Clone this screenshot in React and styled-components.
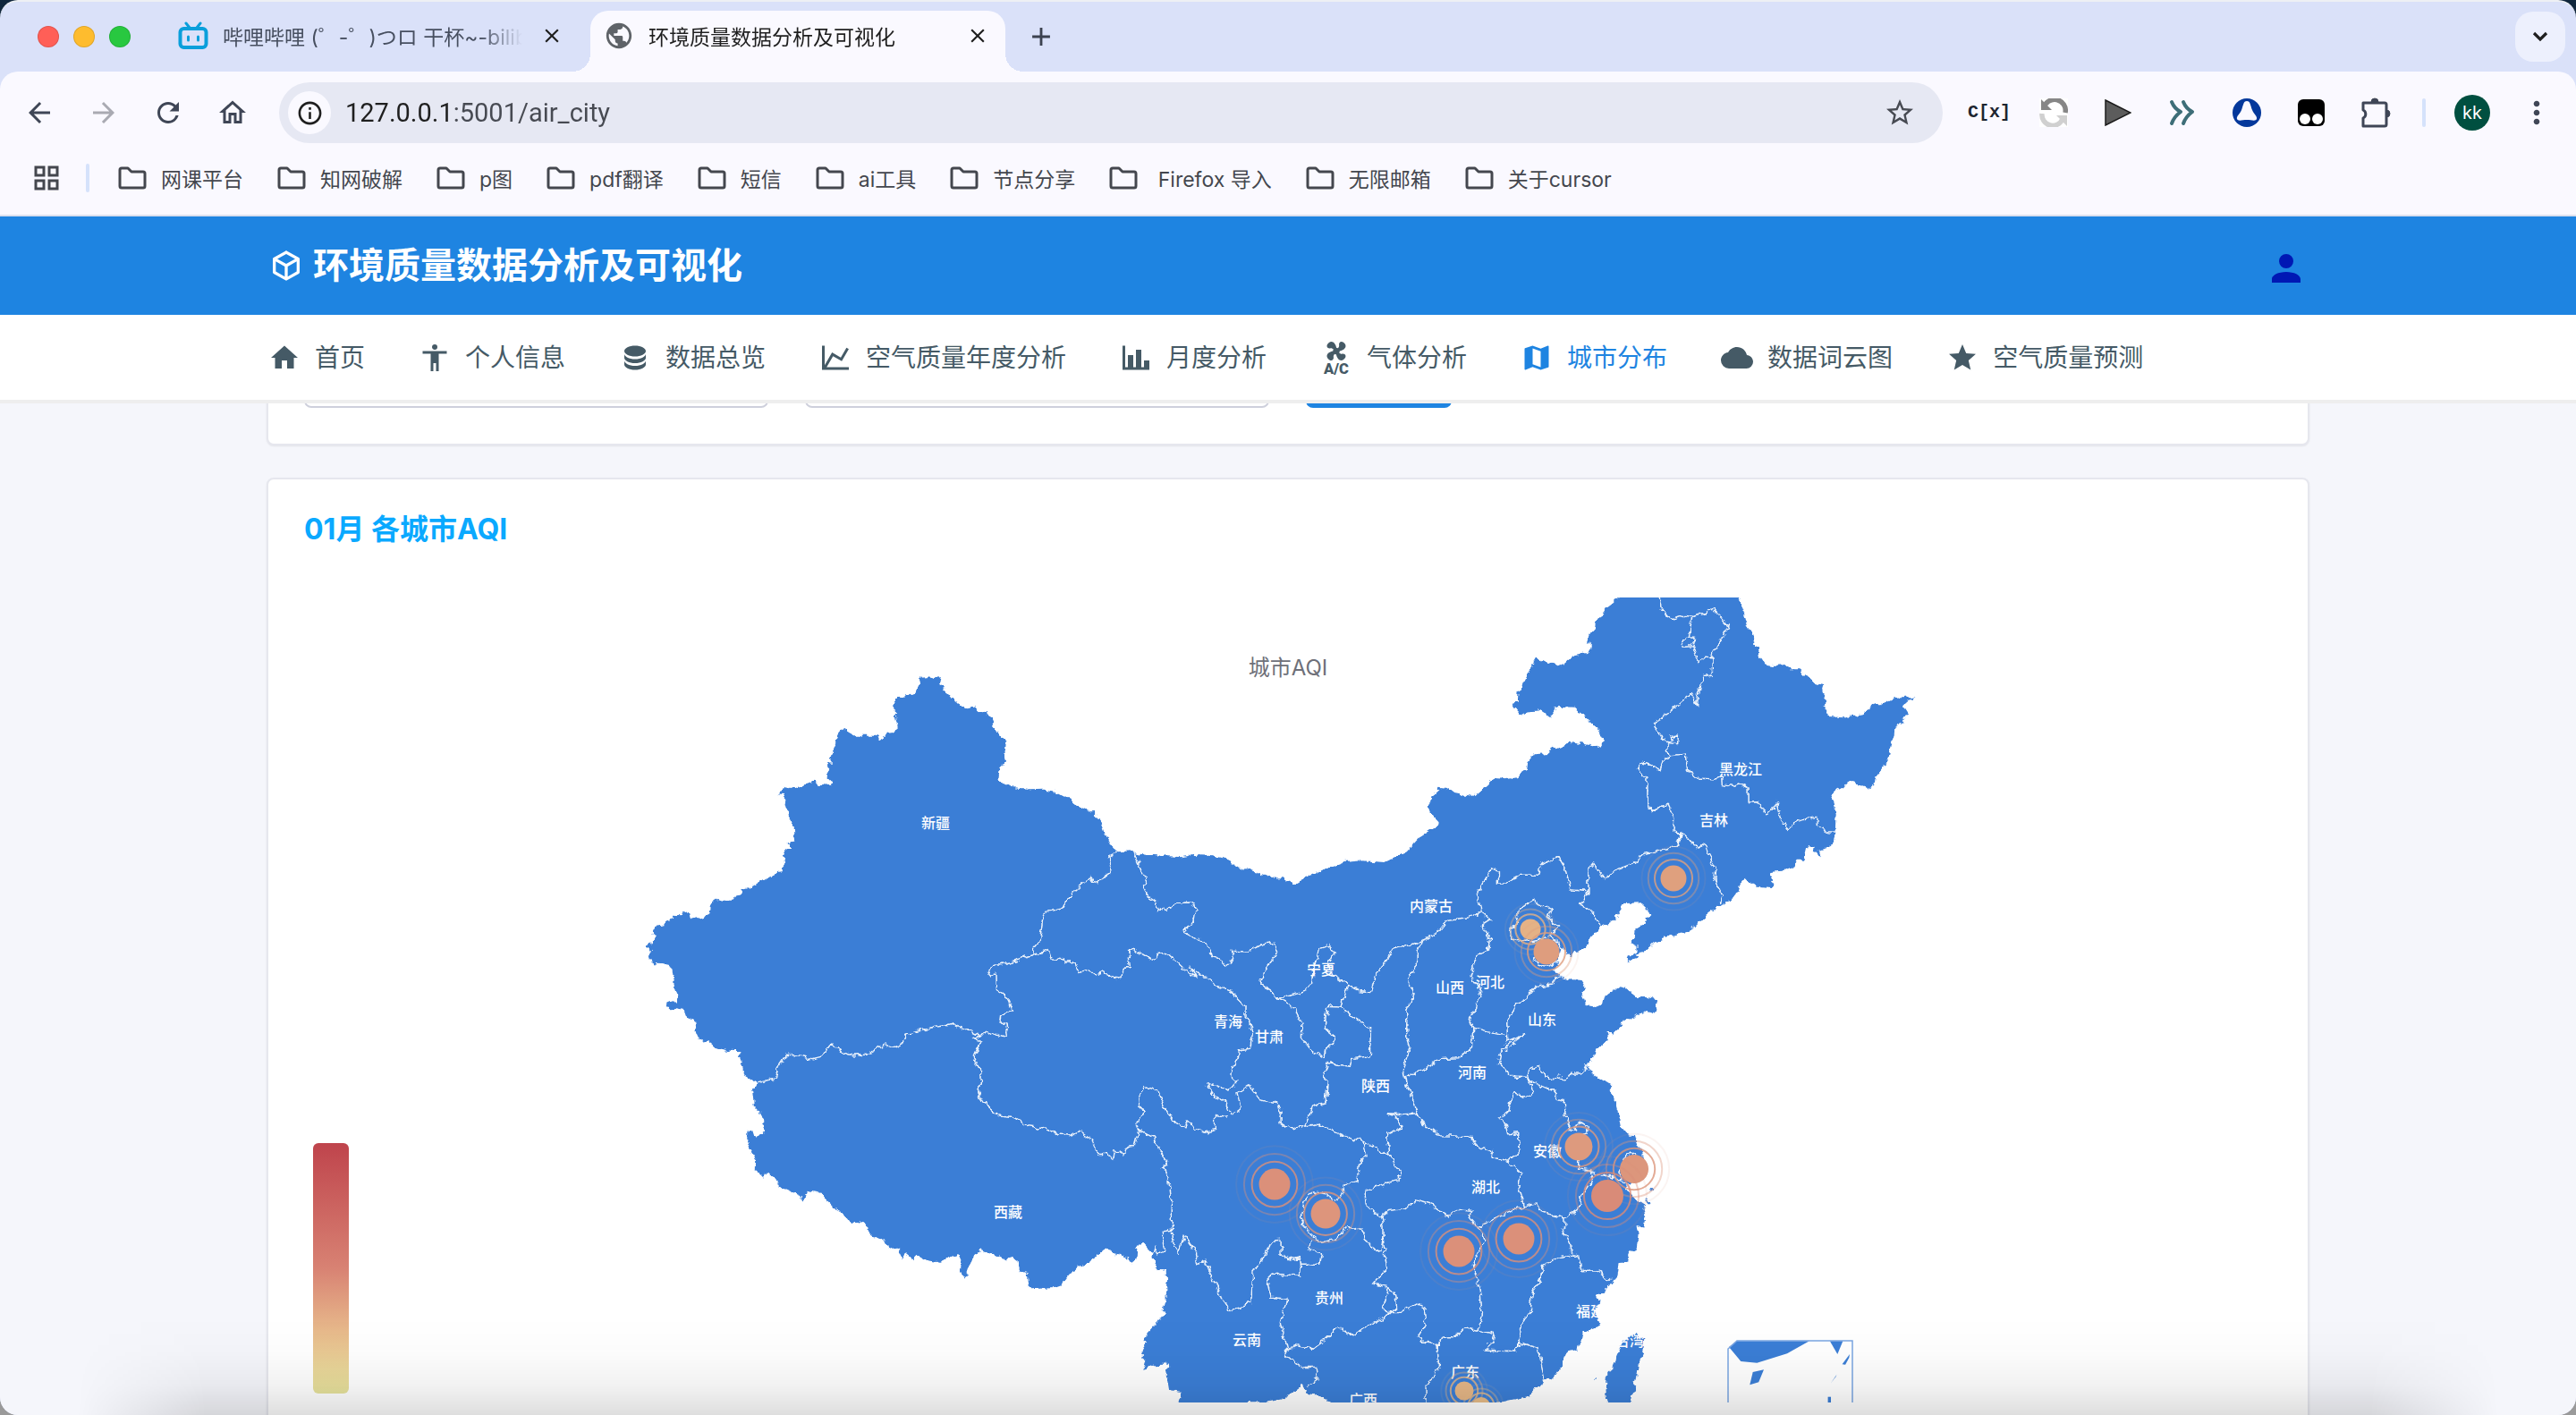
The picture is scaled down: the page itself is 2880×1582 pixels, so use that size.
import React from 'react';
import styled, { createGlobalStyle } from 'styled-components';
import {
    MdAdd,
    MdArrowBack,
    MdArrowForward,
    MdClose,
    MdInfoOutline,
    MdMoreVert,
    MdOutlineGridView,
    MdOutlineHome,
    MdPublic,
    MdRefresh,
    MdStarOutline,
} from 'react-icons/md';

const GlobalStyle = createGlobalStyle`
    * {
        box-sizing: border-box;
    }

    body {
        margin: 0;
        font-family: Inter, "Noto Sans CJK SC", sans-serif;
        background: linear-gradient(#10263c 50%, #9a9a9a 50%);
    }

    button {
        padding: 0;
        border: 0;
        background: none;
        font: inherit;
        color: inherit;
        cursor: pointer;
    }

    a {
        color: inherit;
        text-decoration: none;
    }

    svg {
        display: block;
        flex: none;
    }
`;

/* ---------- browser frame ---------- */

const BrowserWindow = styled.div`
    position: relative;
    display: flex;
    flex-direction: column;
    height: 100vh;
    overflow: hidden;
    border-radius: 20px;
    background: #dae1f9;
    border-top: 2px solid #eef0f4;
`;

const DockShade = styled.div`
    position: absolute;
    left: 0;
    right: 0;
    bottom: 0;
    height: 110px;
    pointer-events: none;
    background: linear-gradient(rgba(0, 0, 0, 0), rgba(0, 0, 0, 0.01) 35%, rgba(0, 0, 0, 0.05) 70%, rgba(0, 0, 0, 0.13));
    mask-image: linear-gradient(90deg, transparent 3%, #000 8%, #000 92%, transparent 97%);
`;

const TabStrip = styled.div`
    display: flex;
    align-items: flex-end;
    height: 78px;
    padding: 0 12px 0 42px;
`;

const Lights = styled.div`
    display: flex;
    gap: 16px;
    align-self: center;
    margin-right: 38px;
`;

const Light = styled.button`
    width: 24px;
    height: 24px;
    border-radius: 50%;
    background: ${props => props.$color};
    box-shadow: inset 0 0 0 1px rgba(0, 0, 0, 0.12);
`;

const Tab = styled.div`
    position: relative;
    display: flex;
    align-items: center;
    width: 464px;
    height: 68px;
    margin-right: 12px;
    padding: 0 18px 12px 16px;
    border-radius: 20px 20px 0 0;
    font-size: 23px;
    color: ${props => (props.$active ? '#1f1f1f' : '#474f60')};
    background: ${props => (props.$active ? '#faf9ff' : 'transparent')};

    &::before,
    &::after {
        content: '';
        display: ${props => (props.$active ? 'block' : 'none')};
        position: absolute;
        bottom: 0;
        width: 20px;
        height: 20px;
    }

    &::before {
        right: 100%;
        background: radial-gradient(circle at 0 0, transparent 20px, #faf9ff 20px);
    }

    &::after {
        left: 100%;
        background: radial-gradient(circle at 100% 0, transparent 20px, #faf9ff 20px);
    }
`;

const Favicon = styled.span`
    display: flex;
    justify-content: center;
    width: 32px;
    margin-right: 17px;
    color: #5f6368;
`;

const TabTitle = styled.span`
    flex: 1;
    overflow: hidden;
    white-space: nowrap;
    margin-right: 20px;
    mask-image: linear-gradient(90deg, #000 86%, transparent);
`;

const CloseTab = styled.button`
    display: flex;
    color: #1f1f1f;
`;

const NewTab = styled.button`
    display: flex;
    align-items: center;
    justify-content: center;
    align-self: center;
    width: 40px;
    height: 40px;
    margin-left: 8px;
    color: #3c4250;
`;

const TabSearch = styled.button`
    display: flex;
    align-items: center;
    justify-content: center;
    align-self: center;
    width: 56px;
    height: 56px;
    margin-left: auto;
    border-radius: 20px;
    background: #edf0fd;
`;

const Chrome = styled.div`
    border-radius: 20px 20px 0 0;
    background: #faf9ff;
    border-bottom: 2px solid #dbe0ee;
`;

const Toolbar = styled.div`
    display: flex;
    align-items: center;
    height: 92px;
    padding: 0 8px;
`;

const ToolButton = styled.button`
    display: flex;
    align-items: center;
    justify-content: center;
    width: 72px;
    height: 56px;
    color: ${props => (props.$muted ? '#a9aab2' : '#3f4656')};
`;

const Omnibox = styled.div`
    display: flex;
    align-items: center;
    flex: 1;
    height: 68px;
    margin: 0 16px;
    padding: 0 10px;
    border-radius: 34px;
    background: #e6e8f3;
`;

const SiteInfo = styled.button`
    display: flex;
    align-items: center;
    justify-content: center;
    width: 48px;
    height: 48px;
    border-radius: 50%;
    background: #faf9ff;
    color: #1f1f1f;
`;

const Address = styled.input`
    flex: 1;
    min-width: 0;
    padding: 0 0 0 16px;
    border: 0;
    outline: 0;
    font-family: Roboto, sans-serif;
    font-size: 29px;
    background: linear-gradient(90deg, #1f1f1f 132px, #474a52 132px);
    background-clip: text;
    -webkit-text-fill-color: transparent;
`;

const Star = styled.button`
    display: flex;
    width: 56px;
    justify-content: center;
    margin-right: 10px;
    color: #474a52;
`;

const Divider = styled.span`
    width: 4px;
    height: 32px;
    margin: ${props => props.$margin};
    border-radius: 2px;
    background: #d5e2fb;
`;

const Avatar = styled.button`
    width: 40px;
    height: 40px;
    margin-right: 16px;
    border-radius: 50%;
    background: #004f40;
    color: #fff;
    font-size: 20px;
`;

const ExtText = styled.span`
    font-family: "Liberation Mono", monospace;
    font-size: 20px;
    font-weight: 700;
    line-height: 24px;
    color: #1d2530;
`;

const Bookmarks = styled.nav`
    display: flex;
    align-items: center;
    height: 68px;
    padding: 0 34px 14px;
    font-size: 23px;
    color: #44474e;
`;

const Bookmark = styled.a`
    display: flex;
    align-items: center;
    gap: 16px;
    margin-right: 38px;
    white-space: pre;
`;

/* ---------- web page ---------- */

const Viewport = styled.div`
    flex: 1;
    overflow: hidden;
    background: #f5f6fb;
`;

const Container = styled.div`
    width: 100%;
    max-width: 2284px;
    margin: 0 auto;
    padding: 0 2px;
    display: flex;
    align-items: center;
`;

const SiteHeader = styled.header`
    display: flex;
    flex: none;
    height: 110px;
    background: #1e84e1;
`;

const Brand = styled.h1`
    display: flex;
    align-items: center;
    gap: 10px;
    margin: 0;
    font-size: 40px;
    font-weight: 700;
    line-height: 56px;
    color: #fff;
`;

const UserButton = styled.button`
    margin-left: auto;
    padding-top: 6px;
    color: #0018b4;
`;

const SiteNav = styled.nav`
    display: flex;
    flex: none;
    height: 99px;
    background: #fff;
    border-bottom: 4px solid #eee;
`;

const NavList = styled.ul`
    display: flex;
    gap: 60px;
    margin: 0;
    padding: 0;
    list-style: none;
`;

const NavLink = styled.a`
    display: flex;
    align-items: center;
    gap: 16px;
    font-size: 28px;
    line-height: 40px;
    white-space: nowrap;
    color: ${props => (props.$active ? '#1e84e1' : '#455a66')};
`;

const Main = styled.main`
    max-width: 2284px;
    margin: -113px auto 0;
`;

const Card = styled.section`
    margin-bottom: 36px;
    padding: 40px;
    border: 2px solid #e6e7ee;
    border-radius: 8px;
    background: #fff;
    box-shadow: 0 1px 2px rgba(0, 0, 0, 0.08);
`;

const FilterRow = styled.form`
    display: flex;
    gap: 41px;
`;

const FilterSelect = styled.select`
    width: 519px;
    height: 76px;
    border: 2px solid #ced0dc;
    border-radius: 8px;
    background: #fff;
    appearance: none;
`;

const FilterButton = styled.button`
    width: 163px;
    height: 76px;
    border-radius: 8px;
    background: #1e84e1;
`;

const CardTitle = styled.h4`
    margin: -8px 0 52px;
    font-size: 32px;
    font-weight: 700;
    line-height: 48px;
    color: #0aa9ff;
`;

const Chart = styled.svg`
    width: 100%;
    height: auto;
    overflow: hidden;
`;

const ChartTitle = styled.text`
    font-size: 24px;
    fill: #6e7079;
    text-anchor: middle;
`;

const ProvinceName = styled.text`
    font-size: 16px;
    font-weight: 500;
    fill: #fff;
    text-anchor: middle;
`;

/* ---------- icons ---------- */

const iconPaths = {
    cube: 'M21,16.5C21,16.88 20.79,17.21 20.47,17.38L12.57,21.82C12.41,21.94 12.21,22 12,22C11.79,22 11.59,21.94 11.43,21.82L3.53,17.38C3.21,17.21 3,16.88 3,16.5V7.5C3,7.12 3.21,6.79 3.53,6.62L11.43,2.18C11.59,2.06 11.79,2 12,2C12.21,2 12.41,2.06 12.57,2.18L20.47,6.62C20.79,6.79 21,7.12 21,7.5V16.5M12,4.15L6.04,7.5L12,10.85L17.96,7.5L12,4.15M5,15.91L11,19.29V12.58L5,9.21V15.91M19,15.91V9.21L13,12.58V19.29L19,15.91Z',
    account: 'M12,4A4,4 0 0,1 16,8A4,4 0 0,1 12,12A4,4 0 0,1 8,8A4,4 0 0,1 12,4M12,14C16.42,14 20,15.79 20,18V20H4V18C4,15.79 7.58,14 12,14Z',
    home: 'M10,20V14H14V20H19V12H22L12,3L2,12H5V20H10Z',
    human: 'M21,9H15V22H13V16H11V22H9V9H3V7H21V9M12,2A2,2 0 0,1 14,4A2,2 0 0,1 12,6C10.89,6 10,5.1 10,4C10,2.89 10.89,2 12,2Z',
    database: 'M12,3C7.58,3 4,4.79 4,7C4,9.21 7.58,11 12,11C16.42,11 20,9.21 20,7C20,4.79 16.42,3 12,3M4,9V12C4,14.21 7.58,16 12,16C16.42,16 20,14.21 20,12V9C20,11.21 16.42,13 12,13C7.58,13 4,11.21 4,9M4,14V17C4,19.21 7.58,21 12,21C16.42,21 20,19.21 20,17V14C20,16.21 16.42,18 12,18C7.58,18 4,16.21 4,14Z',
    chartLine: 'M16,11.78L20.24,4.45L21.97,5.45L16.74,14.5L10.23,10.75L5.46,19H22V21H2V3H4V17.54L9.5,8L16,11.78Z',
    chartBar: 'M22,21H2V3H4V19H6V10H10V19H12V6H16V19H18V14H22V21Z',
    fan: 'M6.59,0.66C8.93,-1.15 11.47,1.06 12.04,4.5C12.47,4.5 12.89,4.62 13.27,4.84C13.79,4.24 14.25,3.42 14.07,2.5C13.65,0.35 16.06,-1.39 18.35,1.58C20.16,3.92 17.95,6.46 14.5,7.03C14.5,7.46 14.39,7.89 14.16,8.27C14.76,8.78 15.58,9.24 16.5,9.06C18.63,8.64 20.38,11.04 17.41,13.34C15.07,15.15 12.53,12.94 11.96,9.5C11.53,9.5 11.11,9.37 10.74,9.15C10.22,9.75 9.75,10.58 9.93,11.5C10.35,13.64 7.94,15.39 5.65,12.42C3.83,10.07 6.05,7.53 9.5,6.97C9.5,6.54 9.63,6.12 9.85,5.74C9.25,5.23 8.43,4.76 7.5,4.94C5.37,5.36 3.62,2.96 6.59,0.66Z',
    map: 'M15,19L9,16.89V5L15,7.11M20.5,3C20.44,3 20.39,3 20.34,3L15,5.1L9,3L3.36,4.9C3.15,4.97 3,5.15 3,5.38V20.5A0.5,0.5 0 0,0 3.5,21C3.55,21 3.61,21 3.66,20.97L9,18.9L15,21L20.64,19.1C20.85,19 21,18.85 21,18.62V3.5A0.5,0.5 0 0,0 20.5,3Z',
    cloud: 'M19.35,10.03C18.67,6.59 15.64,4 12,4C9.11,4 6.6,5.64 5.35,8.03C2.34,8.36 0,10.9 0,14A6,6 0 0,0 6,20H19A5,5 0 0,0 24,15C24,12.36 21.95,10.22 19.35,10.03Z',
    star: 'M12,17.27L18.18,21L16.54,13.97L22,9.24L14.81,8.62L12,2L9.19,8.62L2,9.24L7.45,13.97L5.82,21L12,17.27Z',
};

const NavIcon = styled.svg`
    overflow: visible;
`;

const AcLabel = styled.text`
    font-family: Roboto, sans-serif;
    font-size: 11px;
    font-weight: 900;
    text-anchor: middle;
`;

const Icon = ({ name, size = 36 }) => (
    <NavIcon width={size} height={size} viewBox="0 0 24 24" fill="currentColor" aria-hidden="true">
        <path d={iconPaths[name]} />
        {name === 'fan' && <AcLabel x="12" y="24">A/C</AcLabel>}
    </NavIcon>
);

const FolderIcon = () => (
    <svg width="32" height="26" viewBox="0 0 32 26" fill="none" stroke="currentColor" strokeWidth="3" strokeLinejoin="round">
        <path d="M2 4a2 2 0 0 1 2-2h7l4 4h13a2 2 0 0 1 2 2v14a2 2 0 0 1-2 2H4a2 2 0 0 1-2-2z" />
    </svg>
);

const BiliIcon = () => (
    <svg width="34" height="32" viewBox="0 0 34 32" fill="none" stroke="#0a9fdb" strokeLinecap="round">
        <path d="M9 2l4 5M25 2l-4 5" strokeWidth="3" />
        <rect x="2.500" y="8" width="29" height="21" rx="4" strokeWidth="4" />
        <path d="M11.500 17v4M22.500 17v4" strokeWidth="3" />
    </svg>
);

const ChevronIcon = () => (
    <svg width="20" height="14" viewBox="0 0 20 14" fill="none" stroke="#1f1f1f" strokeWidth="3.200">
        <path d="M3 3l7 7 7-7" />
    </svg>
);

const SyncIcon = () => (
    <svg width="32" height="32" viewBox="0 0 32 32" fill="none">
        <rect width="32" height="32" fill="#fff" />
        <path d="M5 11A12 12 0 0 1 29 16" stroke="#868686" strokeWidth="5.500" />
        <path d="M2 1v12h12z" fill="#868686" />
        <path d="M3 17a12 12 0 0 0 23 6" stroke="#d0d0d0" strokeWidth="5.500" />
        <path d="M31 31V19H19z" fill="#d0d0d0" />
    </svg>
);

const PlayIcon = () => (
    <svg width="30" height="30" viewBox="0 0 30 30">
        <path d="M1 1l28 14L1 29z" fill="#5c5c5c" stroke="#1c1c1c" strokeWidth="1.500" />
    </svg>
);

const ChevronsIcon = () => (
    <svg width="32" height="32" viewBox="0 0 32 32" fill="none" stroke="#3e6e78" strokeLinecap="round" strokeLinejoin="round" strokeWidth="4">
        <path d="M4 4c2 5 6 9 10 11-4 3-8 7-10 13M17 4c2 5 6 9 10 11-4 3-8 7-10 13" />
    </svg>
);

const CompassIcon = () => (
    <svg width="32" height="32" viewBox="0 0 32 32">
        <circle cx="16" cy="16" r="16" fill="#04389b" />
        <path d="M16 3c4 0 4 5 6 10s6 7 5 10-6 1-11 1-10 2-11-1 3-5 5-10 2-10 6-10z" fill="#faf9ff" />
    </svg>
);

const TamperIcon = () => (
    <svg width="30" height="30" viewBox="0 0 30 30">
        <rect width="30" height="30" rx="6" />
        <circle cx="8" cy="22" r="6" fill="#fff" />
        <circle cx="22" cy="22" r="6" fill="#fff" />
    </svg>
);

const PuzzleIcon = () => (
    <svg width="34" height="34" viewBox="0 0 34 34" fill="none" stroke="currentColor" strokeWidth="3" strokeLinejoin="round">
        <path d="M3 6h24a2 2 0 0 1 2 2v22a2 2 0 0 1-2 2H3v-9a5 5 0 0 0 0-9V6z" />
        <path d="M12 5a4 4 0 0 1 8 0zM29 14a4 4 0 0 1 0 8z" fill="currentColor" strokeWidth="1" />
    </svg>
);

/* ---------- map data ---------- */

// The borders were digitised on five overlapping sheets, each with its own
// origin and scale. Every list below is "x,y x,y ..." on its sheet.
const sheet = (left, top, scaleX, scaleY) => points => points
    .trim()
    .split(/\s+/)
    .map(pair => {
        const [x, y] = pair.split(',').map(Number);
        return `${Math.round((left + x / scaleX) * 10) / 10},${Math.round((top + y / scaleY) * 10) / 10}`;
    })
    .join(' ');

const northWest = sheet(700, 660, 2.24, 3);
const southWest = sheet(700, 1000, 2.24, 2.694);
const central = sheet(1200, 900, 2.24, 2.299);
const northEast = sheet(1600, 650, 2.613, 3);
const southEast = sheet(1600, 1060, 2.613, 3);

const mainland = [
    northWest(`50,1190 66,1180 72,1165 66,1150 75,1127 95,1123 118,1100 115,1088 138,1090 154,1074 159,1105 185,1097
        195,1102 210,1075 215,1048 228,1035 245,1040 268,1040 272,1026 288,1020 290,1006 310,998 350,965 372,958 378,945
        392,943 390,930 397,918 393,890 398,875 413,862 404,852 413,843 424,842 421,800 410,770 405,735 402,718 404,703
        392,684 380,682 384,672 405,664 432,658 472,638 480,650 513,654 516,636 502,618 505,585 512,578 517,550 525,525
        528,500 536,475 542,466 560,480 575,488 625,488 637,498 655,482 670,480 678,460 673,435 670,385 680,357 705,354
        722,345 735,320 732,302 740,293 755,291 768,295 786,288 782,312 797,328 793,338 822,362 828,378 855,397 873,391
        888,410 900,406 902,418 916,428 925,460 935,485 943,490 951,515 950,535 944,547 950,572 935,605 933,628 942,652
        955,652 965,660 1003,665 1012,670 1045,668 1078,675 1115,702 1122,716 1155,740 1174,738 1174,762 1184,765
        1203,833 1226,866 1227,880 1270,877 1320,888 1390,895 1435,886 1462,887 1508,902 1523,928 1540,934 1557,935`),
    central(`403,158 432,162 465,175 500,188 528,187 530,197 555,202 580,187 620,170 680,147 725,143 780,147 835,120
        865,85 910,55 913,42 893,20 888,5`),
    northEast(`5,715 25,693 50,697 65,710 120,723 155,690 165,680 180,663 210,665 245,658 280,630 283,605 300,580
        345,576 352,556 365,562 405,542 430,548 440,543 480,555 498,550 502,530 490,500 470,480 455,455 435,440 418,422
        370,420 347,453 320,433 275,437 258,448 238,420 238,408 253,403 255,372 268,350 275,320 307,257 325,268 350,275
        372,283 390,275 415,250 455,240 467,225 467,207 455,203 466,175 478,160 480,145 490,130 512,90 530,75 548,54
        570,20 880,20 893,54 908,85 915,110 920,135 940,170 945,208 960,222 955,248 972,277 995,282 1030,280 1050,295
        1075,295 1100,320 1120,342 1145,348 1142,370 1155,393 1147,415 1165,450 1220,455 1262,448 1268,433 1297,412
        1315,412 1345,395 1412,385 1392,400 1380,425 1392,447 1375,475 1357,485 1355,515 1343,545 1338,575 1330,610
        1310,640 1297,660 1295,685 1285,695 1220,668 1205,690 1165,713 1178,745 1183,780 1180,840 1175,880 1160,893
        1130,902 1142,922 1118,912 1120,888 1100,885 1090,935 1068,935 1057,960 1040,970 988,975 990,990 1002,1010
        997,1030 955,1025 920,995 905,1008 895,1040 875,1070 850,1082 805,1120 770,1150 752,1178 700,1187 650,1212
        625,1240 600,1250 605,1262 572,1275 572,1262 605,1240 605,1222 582,1212 595,1198 597,1170 620,1155 638,1118
        628,1095 612,1078 560,1080 555,1100 530,1140 493,1160 470,1190 460,1215 445,1235 415,1240 413,1258 395,1248
        385,1225 378,1245 372,1275 360,1300`),
    southEast(`378,95 410,105 435,108 445,125 455,135 440,150 445,175 455,192 480,198 497,190 500,172 520,155 550,133
        570,138 600,165 630,165 662,172 658,200 655,218 630,210 600,225 560,245 555,262 530,290 513,280 518,300 500,330
        480,345 470,380 455,390 457,405 490,435 522,458 535,500 545,550 555,570 560,610 590,630 597,655 618,680 622,700
        615,725 605,760 585,790 565,800 570,810 590,830 605,850 625,865 618,880 625,905 620,935 600,930 605,960 600,1005
        580,1020 570,1050 550,1060 545,1095 530,1115 510,1150 485,1160 485,1175 495,1190 478,1215 487,1250 492,1270
        470,1275 455,1290 440,1290 440,1310 430,1345 395,1355 388,1375 385,1395 365,1430 350,1445 330,1447 320,1470
        300,1480 295,1500 260,1510 215,1520 180,1524 160,1560`),
    central('640,1560 640,1532 615,1522 590,1515 572,1492 545,1512 520,1528 490,1534 440,1534 430,1560 272,1560'),
    southWest(`1383,1530 1391,1515 1391,1500 1360,1495 1355,1460 1350,1435 1360,1413 1320,1415 1295,1433 1303,1410
        1290,1385 1302,1358 1300,1330 1325,1297 1335,1280 1350,1272 1343,1250 1352,1215 1350,1130 1330,1122 1322,1110
        1320,1080 1305,1065 1293,1050 1280,1060 1278,1098 1267,1108 1235,1085 1220,1075 1200,1068 1180,1080 1170,1098
        1118,1130 1097,1160 1092,1175 1075,1183 1010,1186 1007,1165 1005,1140 983,1133 980,1100 965,1088 955,1103
        925,1085 887,1073 865,1095 855,1130 855,1150 848,1157 837,1135 840,1105 832,1083 800,1098 780,1107 745,1100
        725,1085 715,1097 700,1083 695,1100 680,1063 655,1070 648,1038 630,1042 602,1017 600,990 585,983 568,995 550,965
        525,950 495,915 490,900 455,892 443,925 435,905 385,878 378,860 350,840 340,848 322,830 323,795 310,760 303,740
        303,717 316,710 320,725 330,735 345,715 343,680 335,655 320,635 316,592 330,570 295,543 290,515 282,490 288,472
        250,470 225,460 205,440 187,443 178,420 172,378 150,367 145,350 100,340 102,330 118,322 130,322 122,290 115,220
        105,213 78,208 72,220 62,213 58,185 65,175 50,155`),
].join(' ');

const islands = [
    southEast('597,1290 607,1305 620,1310 617,1360 605,1400 600,1450 590,1490 580,1540 518,1540 508,1490 512,1440 530,1400 548,1350 562,1320 585,1300'),
    southEast('623,845 634,843 643,853 632,853'),
    southEast('640,810 648,810 646,820'),
    southEast('478,1444 483,1444 482,1450'),
];

const insetLand = [
    southEast('893,1318 1105,1318 1040,1360 952,1391 905,1386 870,1338'),
    southEast('1165,1318 1203,1318 1187,1362'),
    southEast('1201,1396 1223,1362 1221,1374 1210,1397'),
    southEast('1167,1460 1185,1430 1182,1438'),
    southEast('1159,1505 1168,1505 1168,1530 1159,1530'),
    southEast('940,1422 972,1414 957,1456 931,1465'),
];

const borders = [
    northWest('1227,880 1210,893 1208,905 1217,930 1212,950 1172,985 1163,967 1145,980 1120,1010 1100,1045 1093,1068 1050,1078 1043,1110 1035,1175 1020,1200 1022,1222'),
    northWest('1270,877 1303,978 1293,995 1310,1030 1330,1048 1330,1078 1350,1062 1352,1072 1372,1055 1400,1047 1418,1048 1427,1070 1423,1105 1410,1130 1390,1142'),
    northWest('1022,1222 1058,1208 1064,1232 1098,1235 1100,1248 1125,1247 1133,1282 1160,1275 1175,1288 1193,1280 1223,1303 1240,1293 1250,1262 1262,1262 1258,1205 1275,1208 1320,1242 1330,1220 1352,1216 1400,1275 1425,1297 1415,1270 1440,1292 1460,1300 1470,1320 1515,1345 1550,1395'),
    northWest('1022,1222 970,1245 930,1258 905,1272 913,1295 925,1285 926,1340 950,1362 966,1405 938,1425 936,1445 952,1452 955,1493'),
    southWest('955,425 945,430 900,412 888,427 855,408 820,392 760,402 705,417 695,445 670,460 650,450 600,483 570,485 540,475 530,458 510,455 490,488 465,495 435,485 400,483 385,510 375,555 330,565'),
    southWest('888,427 870,433 887,445 870,490 880,520 888,525 890,570 880,595 900,635 935,668 975,673 1010,698 1060,708 1080,722 1110,725 1137,710 1165,735 1172,760 1185,783 1205,782 1218,795 1225,770 1245,785 1255,763 1275,755 1285,712 1280,690 1297,648 1285,640 1283,608 1300,580 1332,593 1350,650 1375,685 1400,700 1408,680 1425,705 1450,717 1475,710 1475,665 1505,668'),
    southWest('1285,712 1320,733 1335,765 1356,815 1345,822 1360,870 1367,930 1367,1010 1372,1060 1383,1080 1398,1025 1425,1075 1430,1112 1450,1103 1470,1160 1492,1220 1510,1255'),
    southWest('1367,1010 1345,1015 1345,1050 1348,1075 1332,1085 1325,1063 1322,1080'),
    central('430,517 430,540 440,552 450,583 442,628 415,632 413,650 395,680 398,700 410,710 400,725 385,733 342,713 337,725 350,745 380,762 385,775 395,800'),
    central('272,322 335,358 345,385 385,410 400,395 395,373 430,375 475,360 505,355 512,380 500,397 475,430 470,460 515,497 585,475 597,460 600,425 615,370 640,362 655,378 640,405 640,430 670,447 690,465 715,477 748,480 753,455 765,430 800,370 850,358 873,348'),
    central('515,497 540,510 560,535 573,565 572,600 600,635 627,650 632,625 650,615 655,595 630,575 632,545 638,518 670,520 675,490 690,465'),
    central('670,520 710,550 745,572 742,645 700,652 695,672 637,663 625,695 637,710 632,765 600,772 592,800 580,825 550,835 520,820 520,790 510,765 465,755 440,722 410,740 420,780 395,800'),
    central('580,825 610,820 680,850 725,865 790,900 785,845 820,830 815,805 785,795 830,797 865,795 845,750 830,697 825,680 842,625 835,600 835,530 852,485 838,450 850,425 865,400 865,370 873,348'),
    central('873,348 905,335 935,295 990,290 1022,275 1012,235 1020,210 1045,165 1065,170 1065,200 1085,200 1120,180 1165,180 1175,150 1215,132 1230,160 1245,218 1290,222 1290,165 1303,150 1330,190 1350,170 1400,150 1430,125 1470,118 1510,105 1520,75'),
    central('1290,222 1270,255 1300,275 1320,315'),
    central('1022,275 1045,295 1022,310 1045,345 1040,375 1010,385 995,440 1023,480 1010,520 993,550 1003,573 1000,625 965,650 920,652 880,680 830,697'),
    central('1003,573 1080,590 1090,597 1085,610 1127,592 1095,615 1068,640 1063,665 1095,695 1135,700 1145,680 1165,672 1183,700 1200,705 1215,697 1235,710 1250,690 1275,690 1285,665'),
    central('1090,597 1088,560 1110,510 1135,495 1160,465 1200,460 1218,437'),
    central('1135,700 1165,718 1200,735 1215,755 1230,760 1232,795 1240,825 1255,838 1258,822 1270,815 1285,825 1288,840 1265,850 1265,935 1295,940'),
    central('1135,700 1150,720 1145,745 1130,752 1105,738 1095,760 1090,790 1065,805 1085,825 1090,845 1115,843 1115,890 1090,918'),
    central('865,795 875,820 920,850 1000,852 1010,877 1045,890 1050,905 1090,918 1120,945 1115,985 1128,1032'),
    central('725,865 735,900 715,925 710,965 680,975 670,1005 650,1020 640,1000 600,995 585,1005 575,1040 570,1060 585,1095 600,1110 620,1125 660,1115 685,1085 720,1090 745,1135 770,1150 775,1110'),
    central('790,900 820,940 815,965 785,970 750,985 733,992 735,1030 755,1050 770,1060 775,1080 775,1110 785,1190 750,1230 790,1240'),
    central('770,1060 790,1045 830,1040 855,1015 900,1030 935,1055 965,1040 1000,1045 990,1055 1015,1085 1065,1060 1128,1032 1160,1025 1170,1045 1230,1062 1265,1040 1270,1010 1300,965 1295,940 1340,955 1370,965 1395,980'),
    central('1370,965 1372,930 1385,900 1395,890 1405,900'),
    central('1015,1085 1030,1120 1000,1180 1013,1225 1020,1260 1023,1300 1015,1350'),
    central('1230,1062 1228,1095 1245,1130 1250,1155 1210,1165 1175,1185 1170,1220 1150,1250 1145,1300 1125,1330 1115,1380 1108,1405'),
    central('1250,1155 1265,1160 1272,1197 1310,1195 1345,1220'),
    central('1015,1350 980,1345 960,1365 925,1365 912,1393 885,1380 868,1380 862,1360 885,1340 880,1290 860,1283 820,1305 790,1305'),
    central('790,1240 808,1260 812,1290 790,1310 775,1290 790,1240'),
    central('790,1310 745,1335 700,1365 665,1340 630,1375 600,1398 560,1390 535,1400 518,1330 535,1270 495,1265 485,1220 500,1205 568,1210 570,1180 615,1180 622,1155 590,1140 595,1115'),
    central('390,1300 445,1280 450,1200 480,1155 495,1120 520,1118 520,1155 545,1170 568,1165 570,1180'),
    central('535,1400 530,1415 570,1445 610,1445 613,1475 585,1495'),
    central('912,1393 915,1440 905,1470 885,1490 885,1550'),
    central('1015,1350 1055,1360 1050,1380 1030,1400 1108,1405 1115,1380 1165,1395 1172,1440 1180,1475'),
    central('1110,295 1115,270 1150,243 1165,255 1200,268 1190,290 1215,315 1195,330 1175,345 1130,350 1095,345 1095,320 1112,305 1110,295'),
    central('1190,330 1215,350 1225,380 1215,400 1190,415 1165,410 1150,390'),
    northEast('667,20 667,54 672,90 685,115 710,125 735,115 765,118 800,108 820,88 870,150 855,185 838,212 820,250 822,315 795,320 780,375 778,412 762,375 745,390 700,435 655,470 652,488 685,540 720,545 722,520 700,520 705,535 690,550 688,570 695,587 743,582 748,625 770,660 838,663 848,655 850,680 880,685 900,678 928,690 928,738 955,737 980,788 1010,745 1025,810 1045,835 1065,805 1105,795 1128,790 1130,820 1160,842 1183,843'),
    northEast('762,118 753,188 772,190 765,218 740,220 732,200 753,188'),
    northEast('765,218 780,272 800,252 820,255'),
    northEast('695,587 680,600 668,632 645,615 612,605 605,632 632,660 632,720 642,772 692,745 710,790 708,835 728,850 720,885'),
    northEast('728,850 735,842 765,880 775,898 798,875 815,930 830,965 828,1000 852,1055 845,1080'),
];

const provinces = [
    ['新疆', 1046, 920],
    ['西藏', 1127, 1355],
    ['青海', 1373, 1142],
    ['甘肃', 1419, 1159],
    ['宁夏', 1477, 1084],
    ['内蒙古', 1600, 1013],
    ['黑龙江', 1946, 860],
    ['吉林', 1916, 917],
    ['河北', 1666, 1098],
    ['山西', 1621, 1104],
    ['山东', 1724, 1140],
    ['河南', 1646, 1199],
    ['陕西', 1538, 1214],
    ['安徽', 1730, 1287],
    ['湖北', 1661, 1327],
    ['贵州', 1486, 1451],
    ['云南', 1394, 1498],
    ['广西', 1524, 1565],
    ['广东', 1638, 1534],
    ['福建', 1778, 1466],
    ['台湾', 1822, 1499],
];

const cities = [
    { x: 1871, y: 982, r: 14.5, color: '#dfa07e' },
    { x: 1711, y: 1039, r: 11.5, color: '#e4b286' },
    { x: 1729, y: 1064, r: 14.5, color: '#de9d7e' },
    { x: 1765, y: 1282, r: 15.5, color: '#dd9a7e' },
    { x: 1827, y: 1307, r: 16, color: '#dc967c' },
    { x: 1797, y: 1337, r: 18, color: '#d98b78' },
    { x: 1698, y: 1385, r: 17.5, color: '#db907a' },
    { x: 1631, y: 1399, r: 17.5, color: '#db907a' },
    { x: 1425, y: 1324, r: 17.5, color: '#db907a' },
    { x: 1482, y: 1357, r: 16.5, color: '#dd957c' },
    { x: 1637, y: 1555, r: 10.5, color: '#e6b787' },
    { x: 1656, y: 1572, r: 10, color: '#e7bc88' },
];

const ripples = [
    { grow: 1.45, opacity: 0.8 },
    { grow: 1.95, opacity: 0.4 },
    { grow: 2.45, opacity: 0.1 },
];

const AqiMap = () => (
    <Chart viewBox="340 668 2200 900" role="img" aria-label="城市AQI">
        <defs>
            <linearGradient id="scale" x1="0" y1="0" x2="0" y2="1">
                <stop offset="0" stopColor="#bf444c" />
                <stop offset="0.500" stopColor="#d88273" />
                <stop offset="0.750" stopColor="#e7b98b" />
                <stop offset="0.900" stopColor="#ead699" />
                <stop offset="1" stopColor="#e6e29c" />
            </linearGradient>
            {/* roughens the simplified coast and border lines */}
            <filter id="coast" filterUnits="userSpaceOnUse" x="640" y="640" width="1600" height="960">
                <feTurbulence type="fractalNoise" baseFrequency="0.120" numOctaves="3" seed="4" />
                <feDisplacementMap in="SourceGraphic" scale="8" xChannelSelector="R" yChannelSelector="G" />
            </filter>
        </defs>
        <g filter="url(#coast)">
            <polygon points={mainland} fill="#3b7ed6" />
            {islands.map(points => <polygon key={points} points={points} fill="#3b7ed6" />)}
            {borders.map(points => (
                <polyline key={points} points={points} fill="none" stroke="#fff" strokeOpacity="0.900" strokeWidth="1.500" />
            ))}
        </g>
        {insetLand.map(points => <polygon key={points} points={points} fill="#3b7ed6" />)}
        <path d="M1932 1580V1508L1942 1499H2071V1580" fill="none" stroke="#7ba6e2" strokeWidth="1.500" />
        <ChartTitle x="1440" y="755">城市AQI</ChartTitle>
        {provinces.map(([name, x, y]) => (
            <ProvinceName key={name} x={x} y={y + 6}>{name}</ProvinceName>
        ))}
        {cities.map(city => (
            <g key={`${city.x}-${city.y}`}>
                {ripples.map(ring => (
                    <circle
                        key={ring.grow}
                        cx={city.x}
                        cy={city.y}
                        r={city.r * ring.grow}
                        fill="none"
                        stroke={city.color}
                        strokeOpacity={ring.opacity}
                        strokeWidth="2"
                    />
                ))}
                <circle cx={city.x} cy={city.y} r={city.r} fill={city.color} />
            </g>
        ))}
        <rect x="350" y="1278" width="40" height="280" rx="6" fill="url(#scale)" />
    </Chart>
);

/* ---------- page ---------- */

const bookmarks = ['网课平台', '知网破解', 'p图', 'pdf翻译', '短信', 'ai工具', '节点分享', ' Firefox 导入', '无限邮箱', '关于cursor'];

const navItems = [
    ['home', '首页'],
    ['human', '个人信息'],
    ['database', '数据总览'],
    ['chartLine', '空气质量年度分析'],
    ['chartBar', '月度分析'],
    ['fan', '气体分析'],
    ['map', '城市分布'],
    ['cloud', '数据词云图'],
    ['star', '空气质量预测'],
];

export default function App() {
    return (
        <BrowserWindow>
            <GlobalStyle />
            <TabStrip>
                <Lights>
                    <Light $color="#ff5f57" aria-label="关闭窗口" />
                    <Light $color="#febc2e" aria-label="最小化" />
                    <Light $color="#28c840" aria-label="全屏" />
                </Lights>
                <Tab>
                    <Favicon><BiliIcon /></Favicon>
                    <TabTitle>哔哩哔哩 (゜-゜)つロ 干杯~-bilibili</TabTitle>
                    <CloseTab aria-label="关闭标签页"><MdClose size={26} /></CloseTab>
                </Tab>
                <Tab $active>
                    <Favicon><MdPublic size={34} /></Favicon>
                    <TabTitle>环境质量数据分析及可视化</TabTitle>
                    <CloseTab aria-label="关闭标签页"><MdClose size={26} /></CloseTab>
                </Tab>
                <NewTab aria-label="新标签页"><MdAdd size={34} /></NewTab>
                <TabSearch aria-label="搜索标签页"><ChevronIcon /></TabSearch>
            </TabStrip>

            <Chrome>
                <Toolbar>
                    <ToolButton aria-label="后退"><MdArrowBack size={36} /></ToolButton>
                    <ToolButton aria-label="前进" $muted><MdArrowForward size={36} /></ToolButton>
                    <ToolButton aria-label="刷新"><MdRefresh size={36} /></ToolButton>
                    <ToolButton aria-label="主页"><MdOutlineHome size={36} /></ToolButton>
                    <Omnibox>
                        <SiteInfo aria-label="网站信息"><MdInfoOutline size={31} /></SiteInfo>
                        <Address aria-label="地址" defaultValue="127.0.0.1:5001/air_city" />
                        <Star aria-label="收藏"><MdStarOutline size={36} /></Star>
                    </Omnibox>
                    <ToolButton><ExtText>C[x]</ExtText></ToolButton>
                    <ToolButton aria-label="同步"><SyncIcon /></ToolButton>
                    <ToolButton aria-label="播放"><PlayIcon /></ToolButton>
                    <ToolButton aria-label="快进"><ChevronsIcon /></ToolButton>
                    <ToolButton aria-label="导航"><CompassIcon /></ToolButton>
                    <ToolButton aria-label="脚本"><TamperIcon /></ToolButton>
                    <ToolButton aria-label="扩展程序"><PuzzleIcon /></ToolButton>
                    <Divider $margin="0 32px 0 16px" />
                    <Avatar>kk</Avatar>
                    <ToolButton aria-label="菜单"><MdMoreVert size={40} /></ToolButton>
                </Toolbar>
                <Bookmarks>
                    <MdOutlineGridView size={36} />
                    <Divider $margin="0 32px 0 26px" />
                    {bookmarks.map(name => (
                        <Bookmark key={name} href="#">
                            <FolderIcon />
                            {name}
                        </Bookmark>
                    ))}
                </Bookmarks>
            </Chrome>

            <SiteHeader>
                <Container>
                    <Brand><Icon name="cube" size={40} />环境质量数据分析及可视化</Brand>
                    <UserButton aria-label="用户"><Icon name="account" size={48} /></UserButton>
                </Container>
            </SiteHeader>
            <SiteNav>
                <Container>
                    <NavList>
                        {navItems.map(([icon, name]) => (
                            <li key={name}>
                                <NavLink href="#" $active={icon === 'map'}>
                                    <Icon name={icon} />
                                    {name}
                                </NavLink>
                            </li>
                        ))}
                    </NavList>
                </Container>
            </SiteNav>

            <Viewport>
                <Main>
                    <Card>
                        <FilterRow>
                            <FilterSelect aria-label="年份" />
                            <FilterSelect aria-label="月份" />
                            <FilterButton type="button" aria-label="查询" />
                        </FilterRow>
                    </Card>
                    <Card>
                        <CardTitle>01月 各城市AQI</CardTitle>
                        <AqiMap />
                    </Card>
                </Main>
            </Viewport>
            <DockShade />
        </BrowserWindow>
    );
}
